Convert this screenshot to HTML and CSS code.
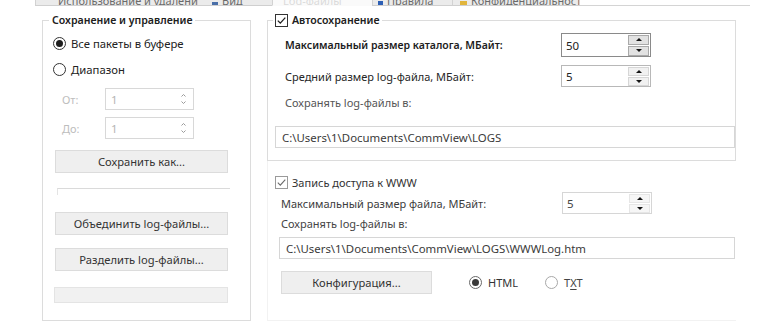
FILE: index.html
```html
<!DOCTYPE html>
<html lang="ru">
<head>
<meta charset="utf-8">
<link rel="stylesheet" href="styles.css">
</head>
<body>
<div class="window">
  <div class="tabs">
    <div class="tab t1"><span>Использование и удаление</span></div>
    <div class="tab t2"><i class="ico sq"></i><span>Вид</span></div>
    <div class="tab t3 active"><span>Log-файлы</span></div>
    <div class="tab t4"><i class="ico dia"></i><span>Правила</span></div>
    <div class="tab t5"><i class="ico warn"></i><span>Конфиденциальность</span></div>
    <div class="tab-rest"></div>
  </div>

  <div class="panels">
    <fieldset class="group left">
      <legend>Сохранение и управление</legend>
      <div class="lbody">
        <div class="radio r1"><span class="rb on"></span><span>Все пакеты в буфере</span></div>
        <div class="radio r2"><span class="rb"></span><span>Диапазон</span></div>
        <div class="srow s1"><span class="dlabel">От:</span>
          <div class="spin dis"><span class="val">1</span>
            <div class="chev"><svg width="7" height="14" viewBox="0 0 7 14"><path d="M1.5 4.5 L3.5 2.5 L5.5 4.5" fill="none" stroke="#9a9a9a" stroke-width="1"/><path d="M1.5 9.5 L3.5 11.5 L5.5 9.5" fill="none" stroke="#9a9a9a" stroke-width="1"/></svg></div>
          </div>
        </div>
        <div class="srow s2"><span class="dlabel">До:</span>
          <div class="spin dis"><span class="val">1</span>
            <div class="chev"><svg width="7" height="14" viewBox="0 0 7 14"><path d="M1.5 4.5 L3.5 2.5 L5.5 4.5" fill="none" stroke="#9a9a9a" stroke-width="1"/><path d="M1.5 9.5 L3.5 11.5 L5.5 9.5" fill="none" stroke="#9a9a9a" stroke-width="1"/></svg></div>
          </div>
        </div>
        <div class="btn b-save">Сохранить как...</div>
        <div class="pline"></div>
        <div class="btn b-merge">Объединить log-файлы...</div>
        <div class="btn b-split">Разделить log-файлы...</div>
        <div class="pbar"></div>
      </div>
    </fieldset>

    <div class="right">
      <fieldset class="group auto">
        <legend><span class="cb dark"><svg width="11" height="11" viewBox="0 0 11 11"><path d="M1.8 5.6 L4.3 8.1 L9.3 2.6" fill="none" stroke="#1e1e1e" stroke-width="1.3"/></svg></span><span>Автосохранение</span></legend>
        <div class="abody">
          <div class="frow f1"><span class="flabel strong">Максимальный размер каталога, МБайт:</span>
            <div class="spin focus tall"><span class="val">50</span><div class="btns"><i class="sb"><b class="up"></b></i><i class="sb"><b class="dn"></b></i></div></div>
          </div>
          <div class="frow f2"><span class="flabel">Средний размер log-файла, МБайт:</span>
            <div class="spin norm"><span class="val">5</span><div class="btns"><i class="sb"><b class="up"></b></i><i class="sb"><b class="dn"></b></i></div></div>
          </div>
          <div class="plabel">Сохранять log-файлы в:</div>
          <div class="path p1">C:\Users\1\Documents\CommView\LOGS</div>
        </div>
      </fieldset>

      <div class="www">
        <div class="cbrow"><span class="cb light"><svg width="11" height="11" viewBox="0 0 11 11"><path d="M1.8 5.6 L4.3 8.1 L9.3 2.6" fill="none" stroke="#6a6a6a" stroke-width="1.1"/></svg></span><span>Запись доступа к WWW</span></div>
        <div class="wrow"><span class="wlabel">Максимальный размер файла, МБайт:</span>
          <div class="spin soft"><span class="val">5</span><div class="btns"><i class="sb"><b class="up"></b></i><i class="sb"><b class="dn"></b></i></div></div>
        </div>
        <div class="wplabel">Сохранять log-файлы в:</div>
        <div class="path p2">C:\Users\1\Documents\CommView\LOGS\WWWLog.htm</div>
        <div class="brow">
          <div class="btn b-conf">Конфигурация...</div>
          <div class="radio rh"><span class="rb on soft"></span><span>HTML</span></div>
          <div class="radio rt"><span class="rb faint"></span><span>T<u>X</u>T</span></div>
        </div>
      </div>
    </div>
  </div>
</div>
</body>
</html>
```

FILE: styles.css
```css
* { box-sizing: border-box; }

body {
  margin: 0;
  background: #ffffff;
  font-family: "Noto Sans", "Open Sans", sans-serif;
  font-size: 11px;
  color: #222222;
}

.window {
  width: 770px;
  height: 330px;
  overflow: hidden;
}

/* ---- tab strip (only its bottom edge is visible) ---- */
.tabs {
  display: flex;
  margin-left: 35px;
  width: 715px;
  height: 6px;
}
.tab {
  height: 6px;
  background: #ebebeb;
  border-left: 1px solid #d2d2d2;
  border-bottom: 1px solid #cfcfcf;
  overflow: hidden;
  display: flex;
  align-items: flex-end;
  gap: 4px;
  padding-left: 10px;
  color: #6a6a6a;
  white-space: nowrap;
}
.tab span { line-height: 9px; }
.t1 { width: 162px; padding-left: 22px; }
.t2 { width: 75px; padding-left: 14px; }
.t3 { width: 100px; }
.t4 { width: 80px; padding-left: 5px; }
.t5 { width: 128px; padding-left: 7px; border-right: 1px solid #d2d2d2; }
.tab.active {
  background: #fafafa;
  border-bottom-color: #fafafa;
  color: #dadada;
}
.tab-rest {
  flex: 1;
  border-bottom: 1px solid #d4d4d4;
}
.ico { display: block; flex: none; width: 7px; height: 5px; }
.ico.sq { background: #4a6fa8; width: 6px; height: 3px; }
.ico.dia { background: #2d5fb5; width: 5px; height: 4px; }
.ico.warn { background: #e1b53c; width: 7px; height: 4px; }

/* ---- panels ---- */
.panels {
  display: flex;
  gap: 16px;
  margin-top: 6px;
  padding-left: 42px;
  align-items: flex-start;
}

fieldset.group {
  margin: 0;
  padding: 0;
  border: 1px solid #dcdcdc;
  min-width: 0;
}
legend {
  line-height: 16px;
  font-weight: 600;
  color: #202020;
}

/* left group */
.left {
  width: 209px;
  border-color: #e2e2e2;
}
.left legend {
  margin-left: 6px;
  padding: 0 3px;
  font-size: 10.6px;
}
.lbody {
  display: flex;
  flex-direction: column;
  align-items: flex-start;
  padding: 0 0 17px 10px;
}

.radio {
  display: flex;
  align-items: center;
  gap: 5px;
  height: 16px;
  white-space: nowrap;
}
.rb {
  width: 13px;
  height: 13px;
  border: 1px solid #333333;
  border-radius: 50%;
  display: flex;
  align-items: center;
  justify-content: center;
  background: #fff;
  flex: none;
}
.rb.on::after {
  content: "";
  width: 7px;
  height: 7px;
  border-radius: 50%;
  background: #1e1e1e;
}
.rb.soft { border-color: #6a6a6a; }
.rb.soft::after { background: #3a3a3a; }
.rb.faint { border-color: #a8a8a8; }
.r1 { margin-top: 7px; font-size: 11.3px; }
.r2 { margin-top: 10px; font-size: 11.3px; }

.srow {
  display: flex;
  align-items: center;
  height: 22px;
  padding-left: 9px;
}
.s1 { margin-top: 11px; }
.s2 { margin-top: 7px; }
.dlabel {
  width: 43px;
  color: #bdbdbd;
}

.spin {
  display: flex;
  align-items: center;
  height: 22px;
  width: 90px;
  border: 1px solid #d0d0d0;
  background: #fff;
}
.spin .val {
  flex: 1;
  padding-left: 4px;
  font-size: 11.5px;
  color: #222;
}
.spin.dis { width: 89px; border-color: #d8d8d8; }
.spin.dis .val { color: #b5b5b5; padding-left: 5px; }
.chev {
  width: 20px;
  display: flex;
  justify-content: center;
}
.btns {
  display: flex;
  flex-direction: column;
  gap: 1px;
  width: 21px;
  margin-right: 1px;
}
.sb {
  display: flex;
  align-items: center;
  justify-content: center;
  height: 9px;
  background: #f0f0f0;
  border: 1px solid #dedede;
}
.sb .up, .sb .dn {
  width: 0;
  height: 0;
  border-left: 3px solid transparent;
  border-right: 3px solid transparent;
}
.sb .up { border-bottom: 3px solid #151515; }
.sb .dn { border-top: 3px solid #151515; }

.spin.tall { height: 24px; }
.spin.focus { border-color: #8a8a8a; }
.spin.focus .sb { background: #e2e2e2; border-color: #a9a9a9; height: 10px; }
.spin.norm { border-color: #b8b8b8; }
.spin.norm .sb { background: #f1f1f1; border-color: #d6d6d6; }
.spin.soft { border-color: #d6d6d6; }
.spin.soft .sb { background: #f6f6f6; border-color: #e6e6e6; }
.spin.soft .val { color: #444; }

.btn {
  display: flex;
  align-items: center;
  justify-content: center;
  height: 23px;
  border: 1px solid #dcdcdc;
  background: #efefef;
  color: #333333;
  font-size: 11.2px;
  white-space: nowrap;
}
.b-save { margin-top: 11px; margin-left: 2px; width: 173px; }
.pline {
  margin-top: 15px;
  margin-left: 4px;
  width: 173px;
  height: 7px;
  border-top: 1px solid #dadada;
  border-left: 1px solid #e4e4e4;
}
.b-merge { margin-top: 17px; margin-left: 2px; width: 173px; }
.b-split { margin-top: 13px; margin-left: 2px; width: 173px; }
.pbar {
  margin-top: 16px;
  margin-left: 1px;
  width: 174px;
  height: 16px;
  border: 1px solid #e4e4e4;
  background: #f1f1f1;
}

/* right column */
.right {
  width: 469px;
  display: flex;
  flex-direction: column;
}
.auto {
  border-color: #dadada;
  border-right-color: #f6f6f6;
  border-bottom-color: #ededed;
}
.auto legend {
  margin-left: 5px;
  padding: 0 2px;
  display: flex;
  align-items: center;
  gap: 4px;
  font-size: 10.6px;
}
.cb {
  width: 13px;
  height: 13px;
  border: 1px solid #333;
  background: #fff;
  display: flex;
  align-items: center;
  justify-content: center;
  flex: none;
}
.cb.light { border-color: #9a9a9a; }

.abody {
  display: flex;
  flex-direction: column;
  padding: 0 0 12px 7px;
}
.frow {
  display: flex;
  align-items: center;
  padding-left: 10px;
}
.f1 { margin-top: 5px; }
.f2 { margin-top: 8px; }
.flabel {
  width: 276px;
  font-size: 11px;
  color: #262626;
}
.flabel.strong { font-weight: 600; font-size: 10.5px; color: #1c1c1c; }
.plabel {
  margin-top: 8px;
  padding-left: 10px;
  line-height: 16px;
  color: #555555;
}
.path {
  display: flex;
  align-items: center;
  height: 22px;
  border: 1px solid #d6d6d6;
  padding-left: 6px;
  font-size: 11.4px;
  color: #3a3a3a;
  white-space: nowrap;
  overflow: hidden;
}
.p1 { margin-top: 15px; width: 460px; }

.www {
  display: flex;
  flex-direction: column;
  border: 1px solid #f2f2f2;
  border-top: none;
  border-right: none;
  padding: 13px 0 26px 7px;
}
.cbrow {
  display: flex;
  align-items: center;
  gap: 4px;
  height: 16px;
  color: #333;
}
.wrow {
  display: flex;
  align-items: center;
  margin-top: 2px;
  padding-left: 6px;
}
.wlabel {
  width: 281px;
  color: #3c3c3c;
}
.wplabel {
  margin-top: 2px;
  padding-left: 6px;
  line-height: 16px;
  color: #444;
}
.p2 { margin-top: 5px; margin-left: 4px; width: 456px; }
.brow {
  display: flex;
  align-items: center;
  margin-top: 12px;
  padding-left: 6px;
}
.b-conf { width: 151px; color: #333; }
.rh { margin-left: 37px; gap: 6px; color: #333; }
.rt { margin-left: 27px; gap: 6px; color: #444; }
.rt u { text-decoration-thickness: 1px; text-underline-offset: 2px; }
```
